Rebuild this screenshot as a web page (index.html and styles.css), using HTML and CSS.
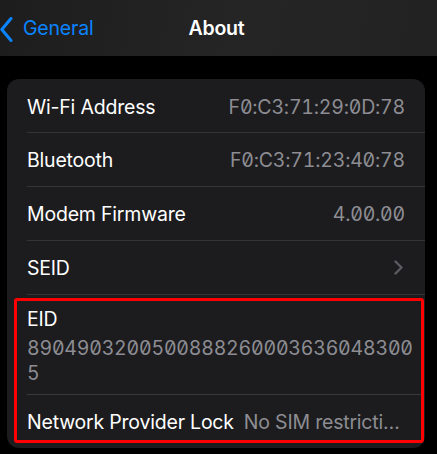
FILE: index.html
```html
<!DOCTYPE html>
<html lang="en">
<head>
<meta charset="utf-8">
<title>About</title>
<link rel="stylesheet" href="styles.css">
</head>
<body>
<header class="navbar">
  <a class="back" href="#">
    <svg class="back-chevron" width="13" height="25" viewBox="0 0 13 25"><path d="M11 1.5 L1.8 12.5 L11 23.5" fill="none" stroke="#0a84ff" stroke-width="3" stroke-linecap="round" stroke-linejoin="round"/></svg>
    <span class="back-label">General</span>
  </a>
  <h1 class="title">About</h1>
</header>
<main class="content">
  <section class="card">
    <div class="row row-first">
      <span class="label">Wi-Fi Address</span>
      <span class="value mono">F0:C3:71:29:0D:78</span>
    </div>
    <div class="row">
      <span class="label">Bluetooth</span>
      <span class="value mono">F0:C3:71:23:40:78</span>
    </div>
    <div class="row">
      <span class="label">Modem Firmware</span>
      <span class="value mono">4.00.00</span>
    </div>
    <div class="row">
      <span class="label">SEID</span>
      <svg class="chevron" width="9" height="15" viewBox="0 0 9 15"><path d="M1.5 1.5 L7.5 7.5 L1.5 13.5" fill="none" stroke="#5b5b60" stroke-width="2.4" stroke-linecap="round" stroke-linejoin="round"/></svg>
    </div>
    <div class="highlight">
      <div class="row row-stack">
        <span class="label">EID</span>
        <span class="value mono eid">8904903200500888260003636048300<br>5</span>
      </div>
      <div class="row row-last">
        <span class="label">Network Provider Lock</span>
        <span class="value truncate">No SIM restrictions</span>
      </div>
    </div>
  </section>
</main>
</body>
</html>
```
FILE: styles.css
```css
* { box-sizing: border-box; }
html, body {
  margin: 0;
  padding: 0;
  background: #000;
  font-family: Inter, "Noto Sans", sans-serif;
  -webkit-font-smoothing: antialiased;
}
body {
  width: 437px;
  height: 454px;
  overflow: hidden;
}
.navbar {
  height: 56px;
  background: linear-gradient(100deg, #1d1d1d 0%, #252525 55%, #222 100%);
  display: flex;
  align-items: center;
  justify-content: center;
  position: relative;
}
.back {
  position: absolute;
  left: 0;
  top: 0;
  height: 56px;
  display: flex;
  align-items: center;
  gap: 10px;
  text-decoration: none;
  color: #0a84ff;
}
.back-chevron { display: block; margin-top: 2px; }
.back-label {
  font-size: 19.5px;
  letter-spacing: -0.2px;
}
.title {
  margin: 0 4px 0 0;
  font-size: 19.5px;
  font-weight: 600;
  color: #fff;
  letter-spacing: -0.2px;
}
.content {
  padding: 23px 12px 0 7px;
}
.card {
  background: #1c1c1e;
  border-radius: 12px;
  padding: 0 0 5px 0;
  overflow: hidden;
}
.row {
  margin-left: 20px;
  padding-right: 20px;
  height: 54px;
  display: flex;
  align-items: center;
  justify-content: space-between;
  gap: 10px;
  border-bottom: 1px solid #343436;
}
.row-first { padding-top: 3px; }
.label {
  color: #fff;
  font-size: 19.5px;
  letter-spacing: -0.2px;
  white-space: nowrap;
}
.value {
  color: #8d8d93;
  font-size: 19.5px;
  letter-spacing: -0.2px;
  white-space: nowrap;
}
.mono {
  font-feature-settings: "tnum" 1, "zero" 1;
}
.chevron { display: block; margin-right: 2px; }
.highlight {
  margin: 3px 1px 0 7px;
  border: 3px solid #ff0000;
  border-radius: 3px;
}
.highlight .row { margin-left: 10px; padding-right: 15px; }
.row-stack {
  height: auto;
  flex-direction: column;
  align-items: flex-start;
  justify-content: flex-start;
  gap: 4px;
  padding-top: 5px;
  padding-bottom: 8px;
  border-bottom: 1px solid #3a3a3c;
}
.row-stack .label { line-height: 26px; }
.eid { line-height: 25px; white-space: normal; }
.row-last {
  border-bottom: none;
  height: 45px;
  padding-top: 8px;
}
.truncate {
  min-width: 0;
  overflow: hidden;
  text-overflow: ellipsis;
}
```
